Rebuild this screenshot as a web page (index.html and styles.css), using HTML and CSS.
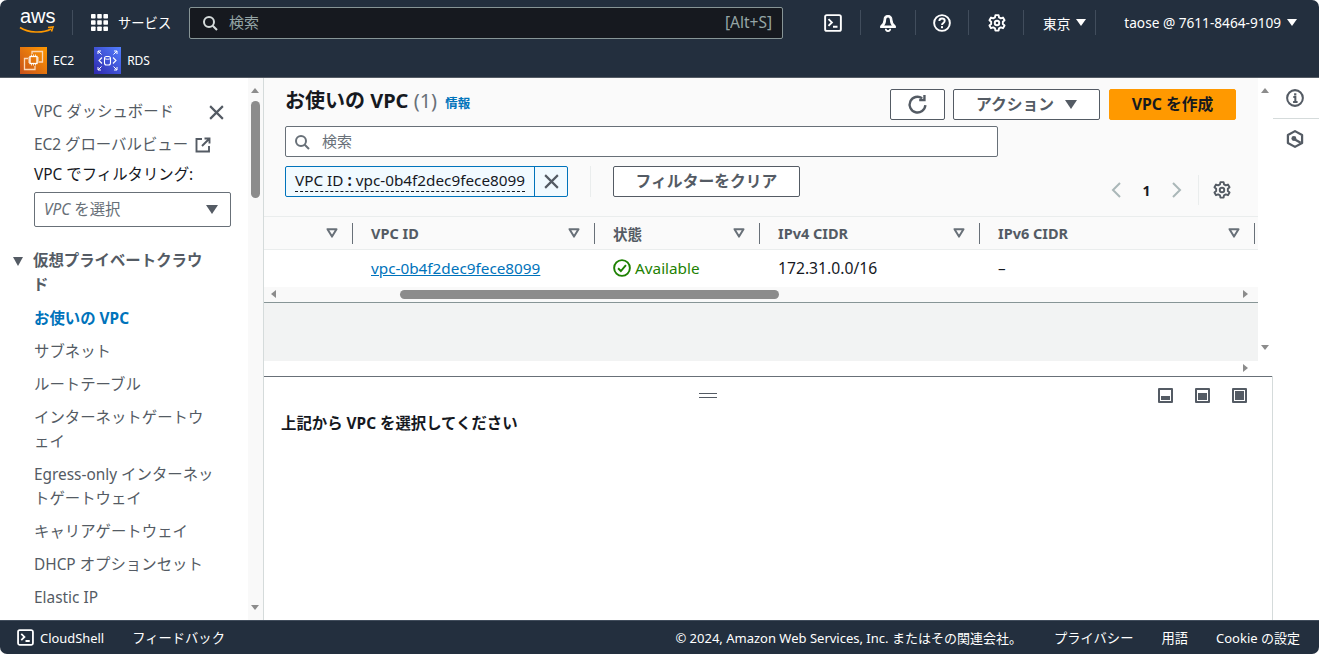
FILE: index.html
```html
<!DOCTYPE html>
<html lang="ja">

<head>
    <meta charset="UTF-8">
    <meta name="viewport" content="width=device-width, initial-scale=1.0">
    <title>お使いの VPC</title>
    <link rel="stylesheet" href="styles.css">
</head>

<body>
    <svg class="defs" width="0" height="0">
        <symbol id="gear" viewBox="0 0 16 16">
            <path d="M6.6 1h2.8l.4 2 1.6.9 1.9-.7 1.4 2.4-1.5 1.3v2l1.5 1.3-1.4 2.4-1.9-.7-1.6.9-.4 2H6.6l-.4-2-1.6-.9-1.9.7-1.4-2.4 1.5-1.3v-2L1.3 5.6l1.4-2.4 1.9.7 1.6-.9z" fill="none" stroke="currentColor" stroke-width="1.7" stroke-linejoin="round"/>
            <circle cx="8" cy="8" r="2" fill="none" stroke="currentColor" stroke-width="1.7"/>
        </symbol>
        <symbol id="terminal" viewBox="0 0 16 16">
            <rect x="1" y="1" width="14" height="14" rx="1.5" fill="none" stroke="currentColor" stroke-width="1.7"/>
            <path d="M4 4.5 7 7.5 4 10.5M8 11.3h4" fill="none" stroke="currentColor" stroke-width="1.7"/>
        </symbol>
        <symbol id="search" viewBox="0 0 16 16">
            <circle cx="7" cy="7" r="5" fill="none" stroke="currentColor" stroke-width="2"/>
            <path d="M10.7 10.7 15 15" fill="none" stroke="currentColor" stroke-width="2"/>
        </symbol>
        <symbol id="close" viewBox="0 0 16 16">
            <path d="M2 2 14 14M14 2 2 14" fill="none" stroke="currentColor" stroke-width="2"/>
        </symbol>
        <symbol id="sort" viewBox="0 0 12 10">
            <path d="M1.5 1.2h9L6 8.6z" fill="none" stroke="currentColor" stroke-width="2" stroke-linejoin="round"/>
        </symbol>
    </svg>

    <div class="app">
        <header class="topbar">
            <div class="topbar-row">
                <div class="aws-logo">
                    <span class="aws-word">aws</span>
                    <svg class="aws-smile" width="36" height="8" viewBox="0 0 36 8"><path d="M1 1.500C9 7 24 7.500 32 3M29 1.500l5-.5-1.500 4.500" fill="none" stroke="#f90" stroke-width="1.600"/></svg>
                </div>
                <span class="top-sep sep-logo"></span>
                <svg class="grid-icon" width="17" height="17" viewBox="0 0 17 17" fill="#fff">
                    <rect width="4.600" height="4.600" rx=".8"/><rect x="6.200" width="4.600" height="4.600" rx=".8"/><rect x="12.400" width="4.600" height="4.600" rx=".8"/>
                    <rect y="6.200" width="4.600" height="4.600" rx=".8"/><rect x="6.200" y="6.200" width="4.600" height="4.600" rx=".8"/><rect x="12.400" y="6.200" width="4.600" height="4.600" rx=".8"/>
                    <rect y="12.400" width="4.600" height="4.600" rx=".8"/><rect x="6.200" y="12.400" width="4.600" height="4.600" rx=".8"/><rect x="12.400" y="12.400" width="4.600" height="4.600" rx=".8"/>
                </svg>
                <span class="services">サービス</span>
                <div class="top-search">
                    <svg class="top-search-icon" width="16" height="16"><use href="#search"/></svg>
                    <span class="top-search-text">検索</span>
                    <span class="top-search-key">[Alt+S]</span>
                </div>
                <div class="top-icons">
                    <span class="top-icon"><svg width="18" height="18"><use href="#terminal"/></svg></span>
                    <span class="top-sep"></span>
                    <span class="top-icon"><svg width="18" height="18" viewBox="0 0 16 16"><path d="M8 1.300c-2.300 0-3.500 1.700-3.500 4 0 2.800-1.300 4.200-3 5.600v1h13v-1c-1.700-1.400-3-2.800-3-5.600 0-2.300-1.200-4-3.500-4z" fill="#fff" stroke="#fff" stroke-width="1" stroke-linejoin="round"/><path d="M6.300 5.600c0-1.500.6-2.500 1.700-2.500s1.700 1 1.700 2.500c0 2 .7 3.500 1.700 4.700H4.600c1-1.200 1.700-2.700 1.700-4.700z" fill="#232f3e"/><path d="M6 13.200a2 2 0 0 0 4 0" fill="none" stroke="#fff" stroke-width="1.500"/></svg></span>
                    <span class="top-sep"></span>
                    <span class="top-icon icon-help"><svg width="18" height="18" viewBox="0 0 16 16"><circle cx="8" cy="8" r="7" fill="none" stroke="#fff" stroke-width="1.700"/><path d="M5.600 6.200C5.700 4.800 6.700 4 8 4c1.400 0 2.400.9 2.400 2.100 0 1.900-2.400 1.800-2.400 3.700" fill="none" stroke="#fff" stroke-width="1.700"/><rect x="7.100" y="10.800" width="1.800" height="1.800" fill="#fff"/></svg></span>
                    <span class="top-sep"></span>
                    <span class="top-icon icon-gear"><svg width="18" height="18"><use href="#gear"/></svg></span>
                    <span class="top-sep"></span>
                    <span class="top-menu region">東京 <i class="caret-white"></i></span>
                    <span class="top-sep"></span>
                    <span class="top-menu account">taose @ 7611-8464-9109 <i class="caret-white"></i></span>
                </div>
            </div>
            <div class="shortcut-row">
                <span class="shortcut">
                    <svg width="27" height="27" viewBox="0 0 27 27">
                        <defs><linearGradient id="ec2bg" x1="0" y1="1" x2="1" y2="0"><stop offset="0" stop-color="#c8511b"/><stop offset="1" stop-color="#f90"/></linearGradient></defs>
                        <rect width="27" height="27" fill="url(#ec2bg)"/>
                        <path d="M12 7V4.500h10.500V15H19M8 11.500H4.500v11H15V19" fill="none" stroke="#fbd8b8" stroke-width="1.300"/>
                        <rect x="10" y="9.500" width="7" height="7" fill="none" stroke="#fff" stroke-width="1.300"/>
                        <path d="M11.500 7.500v2M13.500 7.500v2M15.500 7.500v2M11.500 16.500v2M13.500 16.500v2M15.500 16.500v2M8 11h2M8 13h2M8 15h2M17 11h2M17 13h2M17 15h2" stroke="#fff" stroke-width=".8"/>
                    </svg>
                    EC2
                </span>
                <span class="shortcut">
                    <svg width="27" height="27" viewBox="0 0 27 27">
                        <defs><linearGradient id="rdsbg" x1="0" y1="1" x2="1" y2="0"><stop offset="0" stop-color="#2e27ad"/><stop offset="1" stop-color="#527fff"/></linearGradient></defs>
                        <rect width="27" height="27" fill="url(#rdsbg)"/>
                        <path d="M4 4l3.500 3.500M4 7V4h3M23 4l-3.500 3.500M23 7V4h-3M4 23l3.500-3.500M4 20v3h3M23 23l-3.500-3.500M23 20v3h-3" fill="none" stroke="#fff" stroke-width="1"/>
                        <path d="M8 10.500 5 13.500l3 3M19 10.500l3 3-3 3" fill="none" stroke="#fff" stroke-width="1.100"/>
                        <rect x="10.500" y="9.500" width="6" height="8.500" rx="2" fill="none" stroke="#fff" stroke-width="1.100"/>
                        <path d="M10.500 11.500c1.500 1 4.500 1 6 0" fill="none" stroke="#fff" stroke-width=".9"/>
                    </svg>
                    RDS
                </span>
            </div>
        </header>

        <div class="workspace">
            <nav class="sidebar">
                <div class="nav-content">
                    <div class="nav-top">
                        <span>VPC ダッシュボード</span>
                        <svg class="nav-close" width="17" height="17"><use href="#close"/></svg>
                    </div>
                    <div class="nav-link">EC2 グローバルビュー
                        <svg class="external" width="16" height="16" viewBox="0 0 16 16"><path d="M7 2H1.500v12.500H14V9M9.500 1.500h5v5M14.500 1.500 7 9" fill="none" stroke="currentColor" stroke-width="1.900"/></svg>
                    </div>
                    <div class="nav-filter">VPC でフィルタリング:</div>
                    <div class="nav-select">
                        <em>VPC</em><span class="nav-select-text"> を選択</span>
                        <i class="caret-grey"></i>
                    </div>
                    <div class="nav-group"><i class="caret-group"></i><span>仮想プライベートクラウド</span></div>
                    <a class="nav-item nav-active">お使いの VPC</a>
                    <a class="nav-item">サブネット</a>
                    <a class="nav-item">ルートテーブル</a>
                    <a class="nav-item">インターネットゲートウェイ</a>
                    <a class="nav-item">Egress-only インターネットゲートウェイ</a>
                    <a class="nav-item">キャリアゲートウェイ</a>
                    <a class="nav-item">DHCP オプションセット</a>
                    <a class="nav-item">Elastic IP</a>
                </div>
                <div class="vscroll vscroll-nav">
                    <i class="arrow-up"></i>
                    <span class="vthumb"></span>
                    <i class="arrow-down"></i>
                </div>
            </nav>

            <main class="main">
                <section class="list-pane">
                    <div class="list-body">
                        <div class="list-head">
                            <div class="title-row">
                                <h1 class="page-title">お使いの VPC <span class="count">(1)</span></h1>
                                <a class="info-link">情報</a>
                                <div class="actions">
                                    <button class="btn btn-icon" type="button">
                                        <svg width="21" height="21" viewBox="0 0 16 16"><path d="M14 8.500A6 6 0 1 1 11.500 3.200" fill="none" stroke="currentColor" stroke-width="1.800"/><path d="M13.300 .8V4.600H9.300" fill="none" stroke="currentColor" stroke-width="1.800"/></svg>
                                    </button>
                                    <button class="btn btn-actions" type="button">アクション <i class="caret-grey"></i></button>
                                    <button class="btn btn-primary" type="button">VPC を作成</button>
                                </div>
                            </div>
                            <div class="list-search">
                                <svg width="16" height="16"><use href="#search"/></svg>
                                <span>検索</span>
                            </div>
                            <div class="filter-row">
                                <div class="token">
                                    <span class="token-label"><span class="token-text">VPC ID <b>:</b> vpc-0b4f2dec9fece8099</span></span>
                                    <span class="token-close"><svg width="17" height="17"><use href="#close"/></svg></span>
                                </div>
                                <span class="filter-sep"></span>
                                <button class="btn btn-clear" type="button">フィルターをクリア</button>
                                <div class="pager">
                                    <svg class="pager-arrow" width="12" height="18" viewBox="0 0 12 18"><path d="M10 2 3 9l7 7" fill="none" stroke="currentColor" stroke-width="2"/></svg>
                                    <span class="pager-num">1</span>
                                    <svg class="pager-arrow" width="12" height="18" viewBox="0 0 12 18"><path d="M2 2l7 7-7 7" fill="none" stroke="currentColor" stroke-width="2"/></svg>
                                    <span class="pager-sep"></span>
                                    <svg class="pager-gear" width="18" height="18"><use href="#gear"/></svg>
                                </div>
                            </div>
                        </div>

                        <div class="table-row table-header">
                            <div class="cell"><svg class="sort" width="12" height="10"><use href="#sort"/></svg></div>
                            <div class="cell"><span>VPC ID</span><svg class="sort" width="12" height="10"><use href="#sort"/></svg></div>
                            <div class="cell"><span>状態</span><svg class="sort" width="12" height="10"><use href="#sort"/></svg></div>
                            <div class="cell"><span>IPv4 CIDR</span><svg class="sort" width="12" height="10"><use href="#sort"/></svg></div>
                            <div class="cell"><span>IPv6 CIDR</span><svg class="sort" width="12" height="10"><use href="#sort"/></svg></div>
                        </div>
                        <div class="table-row table-data">
                            <div class="cell"></div>
                            <div class="cell"><a class="vpc-link">vpc-0b4f2dec9fece8099</a></div>
                            <div class="cell status">
                                <svg width="18" height="18" viewBox="0 0 16 16"><circle cx="8" cy="8" r="7" fill="none" stroke="currentColor" stroke-width="1.700"/><path d="M4.500 8.200 7 10.700 11.500 5.500" fill="none" stroke="currentColor" stroke-width="1.700"/></svg>
                                <span>Available</span>
                            </div>
                            <div class="cell cidr">172.31.0.0/16</div>
                            <div class="cell">–</div>
                        </div>
                        <div class="hscroll">
                            <i class="arrow-left"></i>
                            <span class="hthumb"></span>
                            <i class="arrow-right"></i>
                        </div>
                        <div class="table-empty"></div>
                        <div class="hscroll hscroll-outer">
                            <i class="arrow-right"></i>
                        </div>
                    </div>
                    <div class="vscroll vscroll-list">
                        <i class="arrow-up"></i>
                        <i class="arrow-down"></i>
                    </div>
                </section>

                <section class="detail-pane">
                    <div class="detail-tools">
                        <span class="drag-handle"></span>
                        <div class="pane-icons">
                            <span class="pane-icon pane-low"></span>
                            <span class="pane-icon pane-mid"></span>
                            <span class="pane-icon pane-high"></span>
                        </div>
                    </div>
                    <h2 class="detail-title">上記から VPC を選択してください</h2>
                </section>
            </main>

            <aside class="rail">
                <div class="rail-item rail-info">
                    <svg width="18" height="18" viewBox="0 0 16 16"><circle cx="8" cy="8" r="7" fill="none" stroke="currentColor" stroke-width="1.800"/><path d="M6.500 7.200H8.300V11.500M6.300 11.500h4" fill="none" stroke="currentColor" stroke-width="1.800"/><rect x="7.200" y="3.800" width="2" height="2" fill="currentColor"/></svg>
                </div>
                <div class="rail-item rail-second">
                    <svg width="18" height="18" viewBox="0 0 16 16"><path d="M8 1 14.300 4.500v7L8 15l-6.300-3.500v-7z" fill="none" stroke="currentColor" stroke-width="2" stroke-linejoin="round"/><circle cx="7" cy="7.600" r="2.200" fill="currentColor"/><path d="M7.500 8.200 13 11.400" stroke="currentColor" stroke-width="2"/></svg>
                </div>
            </aside>
        </div>

        <footer class="footer">
            <span class="foot-item foot-shell"><svg width="17" height="17"><use href="#terminal"/></svg>CloudShell</span>
            <span class="foot-item foot-feedback">フィードバック</span>
            <span class="foot-item foot-copy">© 2024, Amazon Web Services, Inc. またはその関連会社。</span>
            <span class="foot-item">プライバシー</span>
            <span class="foot-item">用語</span>
            <span class="foot-item foot-cookie">Cookie の設定</span>
        </footer>
    </div>
</body>

</html>
```

FILE: styles.css
```css
* {
    box-sizing: border-box;
}

html,
body {
    height: 100%;
    margin: 0;
    background-color: #fff;
    overflow: hidden;
}

body {
    font-family: "Noto Sans", "Noto Sans CJK JP", sans-serif;
    font-size: 14px;
    color: #16191f;
}

.defs {
    position: absolute;
}

.app {
    display: flex;
    flex-direction: column;
    height: 654px;
    border-radius: 7px;
    overflow: hidden;
}

/* top bar */
.topbar {
    flex: none;
    height: 78px;
    background-color: #232f3e;
    border-bottom: 1px solid #545b64;
    color: #fff;
}

.topbar-row {
    display: flex;
    align-items: center;
    height: 44px;
    padding: 1px 0 0 19px;
}

.aws-logo {
    display: flex;
    flex-direction: column;
    width: 36px;
}

.aws-word {
    font-family: "Liberation Sans", sans-serif;
    font-size: 20px;
    line-height: 17px;
    margin-top: -3px;
    padding-left: 1px;
}

.aws-smile {
    display: block;
    margin-top: 1px;
}

.top-sep {
    display: block;
    flex: none;
    width: 1px;
    height: 25px;
    background-color: #414d5c;
}

.sep-logo {
    margin-left: 17px;
}

.grid-icon {
    margin-left: 18px;
}

.services {
    margin-left: 10px;
    font-size: 13.300px;
    width: 71px;
}

.top-search {
    display: flex;
    align-items: center;
    width: 594px;
    height: 32px;
    padding: 0 10px 2px 12px;
    background-color: #16191f;
    border: 1px solid #879596;
    border-radius: 2px;
}

.top-search-icon {
    color: #d5dbdb;
    margin-top: 2px;
}

.top-search-text {
    margin-left: 11px;
    color: #95a5a6;
    font-size: 15px;
}

.top-search-key {
    margin-left: auto;
    color: #95a5a6;
    font-size: 15.500px;
}

.top-icons {
    display: flex;
    align-items: center;
    margin-left: 41px;
}

.top-icon {
    display: flex;
    justify-content: center;
    width: 18px;
    margin-right: 18px;
}

.top-icon + .top-sep {
    margin-right: 18px;
}

.icon-help {
    margin-left: -1px;
    margin-right: 17px;
}

.icon-help + .top-sep {
    margin-right: 19px;
}

.icon-gear {
    margin-right: 17px;
}

.top-menu {
    display: flex;
    align-items: center;
    gap: 5px;
    font-size: 13.650px;
    white-space: nowrap;
}

.region {
    margin-left: 1px;
    margin-right: 9px;
}

.account {
    margin-left: 28px;
}

.caret-white {
    display: block;
    width: 0;
    height: 0;
    margin-left: 1px;
    border-left: 5px solid transparent;
    border-right: 5px solid transparent;
    border-top: 7px solid #fff;
}

.shortcut-row {
    display: flex;
    gap: 20px;
    padding: 3px 0 0 20px;
}

.shortcut {
    display: flex;
    align-items: center;
    gap: 6px;
    font-size: 12px;
}

/* left nav */
.workspace {
    flex: 1;
    display: flex;
    min-height: 0;
}

.sidebar {
    flex: none;
    display: flex;
    width: 264px;
    border-right: 1px solid #d5dbdb;
    overflow: hidden;
}

.nav-content {
    width: 248px;
    padding: 22px 0 0 34px;
    color: #545b64;
    font-size: 15.400px;
    line-height: 24px;
    line-break: anywhere;
}

.nav-top {
    display: flex;
    align-items: center;
    justify-content: space-between;
    width: 191px;
    height: 24px;
}

.nav-close {
    color: #545b64;
}

.nav-link {
    display: flex;
    align-items: center;
    gap: 7px;
    margin-top: 9px;
    white-space: nowrap;
}

.external {
    flex: none;
}

.nav-filter {
    margin-top: 6px;
    color: #16191f;
}

.nav-select {
    display: flex;
    align-items: center;
    width: 197px;
    height: 35px;
    margin-top: 5px;
    padding: 0 12px 0 9px;
    border: 1px solid #687078;
    border-radius: 2px;
    color: #687078;
    white-space: pre;
}

.nav-select .caret-grey {
    margin-left: auto;
}

.caret-grey {
    display: inline-block;
    width: 0;
    height: 0;
    border-left: 6.500px solid transparent;
    border-right: 6.500px solid transparent;
    border-top: 9px solid #545b64;
}

.nav-group {
    position: relative;
    width: 180px;
    margin: 22px 0 10px -1px;
    font-weight: 700;
}

.caret-group {
    position: absolute;
    left: -20px;
    top: 8px;
    width: 0;
    height: 0;
    border-left: 5.500px solid transparent;
    border-right: 5.500px solid transparent;
    border-top: 9px solid #545b64;
}

.nav-item {
    display: block;
    width: 180px;
    margin-bottom: 9px;
}

.nav-active {
    color: #0073bb;
    font-weight: 700;
}

/* scrollbars */
.vscroll {
    position: relative;
    flex: none;
    width: 15px;
    background-color: #fafafa;
}

.vscroll-nav {
    background-color: #f9f9f9;
    height: 100%;
}

.vthumb {
    position: absolute;
    left: 3px;
    top: 23px;
    width: 9px;
    height: 97px;
    border-radius: 5px;
    background-color: #8c8c8c;
}

.arrow-up,
.arrow-down {
    position: absolute;
    left: 3px;
    width: 0;
    height: 0;
    border-left: 4.500px solid transparent;
    border-right: 4.500px solid transparent;
}

.arrow-up {
    top: 10px;
    border-bottom: 5px solid #8c8c8c;
}

.arrow-down {
    bottom: 10px;
    border-top: 5px solid #8c8c8c;
}

.vscroll-list .arrow-down {
    bottom: 26px;
}

.arrow-left,
.arrow-right {
    position: absolute;
    top: 3px;
    width: 0;
    height: 0;
    border-top: 4.500px solid transparent;
    border-bottom: 4.500px solid transparent;
}

.arrow-left {
    left: 7px;
    border-right: 5px solid #8c8c8c;
}

.arrow-right {
    right: 10px;
    border-left: 5px solid #8c8c8c;
}

/* main area */
.main {
    flex: 1;
    display: flex;
    flex-direction: column;
    min-width: 0;
}

.list-pane {
    flex: none;
    display: flex;
    height: 299px;
    border-bottom: 1px solid #687078;
}

.list-body {
    flex: none;
    width: 994px;
}

.list-head {
    height: 138px;
    padding: 11px 22px 0 21px;
    background-color: #fafafa;
}

.title-row {
    display: flex;
    align-items: center;
    height: 31px;
}

.page-title {
    margin: -7px 0 0;
    font-size: 20px;
    font-weight: 700;
    line-height: 26px;
}

.count {
    font-weight: 400;
    color: #687078;
}

.info-link {
    margin: -4px 0 0 8px;
    color: #0073bb;
    font-size: 12.500px;
    font-weight: 700;
}

.actions {
    display: flex;
    gap: 8px;
    margin-left: auto;
}

.btn {
    height: 31px;
    padding: 0 0 3px;
    border: 1px solid #545b64;
    border-radius: 2px;
    background-color: #fff;
    color: #545b64;
    font: 700 15.800px "Noto Sans", "Noto Sans CJK JP", sans-serif;
}

.btn-icon {
    display: flex;
    align-items: center;
    justify-content: center;
    width: 55px;
    padding: 0;
}

.btn-actions {
    display: flex;
    align-items: center;
    justify-content: center;
    gap: 11px;
    width: 147px;
}

.btn-actions .caret-grey {
    margin-top: 3px;
}

.btn-primary {
    width: 127px;
    margin-left: 1px;
    background-color: #f90;
    border-color: #f90;
    color: #16191f;
}

.list-search {
    display: flex;
    align-items: center;
    gap: 12px;
    width: 713px;
    height: 31px;
    margin-top: 6px;
    padding: 0 8px 2px;
    background-color: #fff;
    border: 1px solid #687078;
    border-radius: 2px;
    color: #687078;
    font-size: 15px;
}

.list-search svg {
    margin-top: 2px;
}

.filter-row {
    display: flex;
    align-items: flex-start;
    margin-top: 9px;
}

.token {
    display: flex;
    width: 283px;
    height: 31px;
    border: 1px solid #0073bb;
    border-radius: 2px;
    background-color: #f1faff;
}

.token-label {
    flex: 1;
    padding: 2px 0 0 9px;
    font-size: 15.300px;
}

.token-text {
    display: inline-block;
    line-height: 22px;
    border-bottom: 1px dashed #16191f;
    white-space: nowrap;
}

.token-close {
    display: flex;
    align-items: center;
    justify-content: center;
    width: 33px;
    border-left: 1px solid #0073bb;
    color: #545b64;
}

.filter-sep {
    width: 1px;
    height: 31px;
    margin: 0 22px;
    background-color: #eaeded;
}

.btn-clear {
    width: 187px;
}

.pager {
    display: flex;
    align-items: center;
    margin: 9px 0 0 auto;
    padding-right: 5px;
    color: #545b64;
}

.pager-arrow {
    color: #aab7b8;
}

.pager-num {
    width: 49px;
    text-align: center;
    color: #16191f;
    font-weight: 700;
}

.pager-sep {
    width: 1px;
    height: 30px;
    margin: 0 14px 0 15px;
    background-color: #eaeded;
}

.table-row {
    display: grid;
    grid-template-columns: 89px 242px 165px 220px 275px 3px;
}

.table-header {
    height: 34px;
    background-color: #fafafa;
    border-top: 1px solid #eaeded;
    border-bottom: 1px solid #eaeded;
    color: #545b64;
    font-size: 14.500px;
    font-weight: 700;
}

.table-header .cell {
    position: relative;
    display: flex;
    align-items: center;
    justify-content: space-between;
    padding: 0 15px 0 18px;
}

.table-header .cell::after {
    content: "";
    position: absolute;
    right: 0;
    top: 6px;
    bottom: 5px;
    width: 1px;
    background-color: #687078;
}

.table-header .cell:first-child {
    justify-content: flex-end;
}

.sort {
    flex: none;
    color: #687078;
}

.table-data {
    height: 37px;
    background-color: #fff;
    align-items: center;
    font-size: 15.300px;
}

.table-data .cell {
    padding-left: 18px;
    padding-bottom: 1px;
}

.table-data .cidr {
    font-size: 15.700px;
}

.vpc-link {
    color: #0073bb;
    text-decoration: underline;
}

.status {
    display: flex;
    align-items: center;
    gap: 4px;
    color: #1d8102;
}

.hscroll {
    position: relative;
    height: 15px;
    background-color: #f9f9f9;
}

.hthumb {
    position: absolute;
    left: 136px;
    top: 3px;
    width: 379px;
    height: 9px;
    border-radius: 5px;
    background-color: #8c8c8c;
}

.table-empty {
    height: 59px;
    border-top: 1px solid #879596;
    background-color: #f2f3f3;
}

.hscroll-outer {
    height: 15px;
    background-color: #fff;
}

.vscroll-list {
    background-color: #fff;
}

.detail-pane {
    flex: 1;
    padding: 0 0 0 17px;
}

.detail-tools {
    position: relative;
    display: flex;
    justify-content: flex-end;
    height: 37px;
    padding: 11px 25px 0 0;
}

.drag-handle {
    position: absolute;
    left: 418px;
    top: 16px;
    width: 18px;
    height: 5px;
    border-top: 1px solid #545b64;
    border-bottom: 1px solid #545b64;
}

.pane-icons {
    display: flex;
    gap: 22px;
}

.pane-icon {
    display: block;
    width: 15px;
    height: 15px;
    border: 2px solid #545b64;
    border-radius: 1px;
    background-color: #fff;
    position: relative;
}

.pane-icon::after {
    content: "";
    position: absolute;
    left: 1px;
    right: 1px;
    bottom: 1px;
    background-color: #545b64;
}

.pane-low::after {
    height: 4px;
}

.pane-mid::after {
    height: 7px;
}

.pane-high::after {
    height: 9px;
}

.detail-title {
    margin: 0;
    font-size: 15.400px;
    font-weight: 700;
    line-height: 20px;
}

/* right rail */
.rail {
    flex: none;
    width: 47px;
    padding-right: 2px;
    border-left: 1px solid #d5dbdb;
    color: #545b64;
}

.rail-item {
    display: flex;
    align-items: center;
    justify-content: center;
    height: 41px;
}

.rail-info {
    margin-right: -2px;
    padding-right: 2px;
    border-bottom: 1px solid #d5dbdb;
}

.rail-second {
    height: 39px;
}

/* footer */
.footer {
    flex: none;
    display: flex;
    align-items: center;
    height: 34px;
    padding: 0 19px 0 17px;
    gap: 28px;
    background-color: #232f3e;
    border-top: 1px solid #414d5c;
    color: #fff;
    font-size: 13.300px;
}

.foot-item {
    white-space: nowrap;
}

.foot-shell {
    display: flex;
    align-items: center;
    gap: 6px;
    font-size: 12.900px;
}

.foot-copy {
    margin-left: auto;
    margin-right: 4px;
    font-size: 13px;
}

.foot-cookie {
    font-size: 13px;
}
```
